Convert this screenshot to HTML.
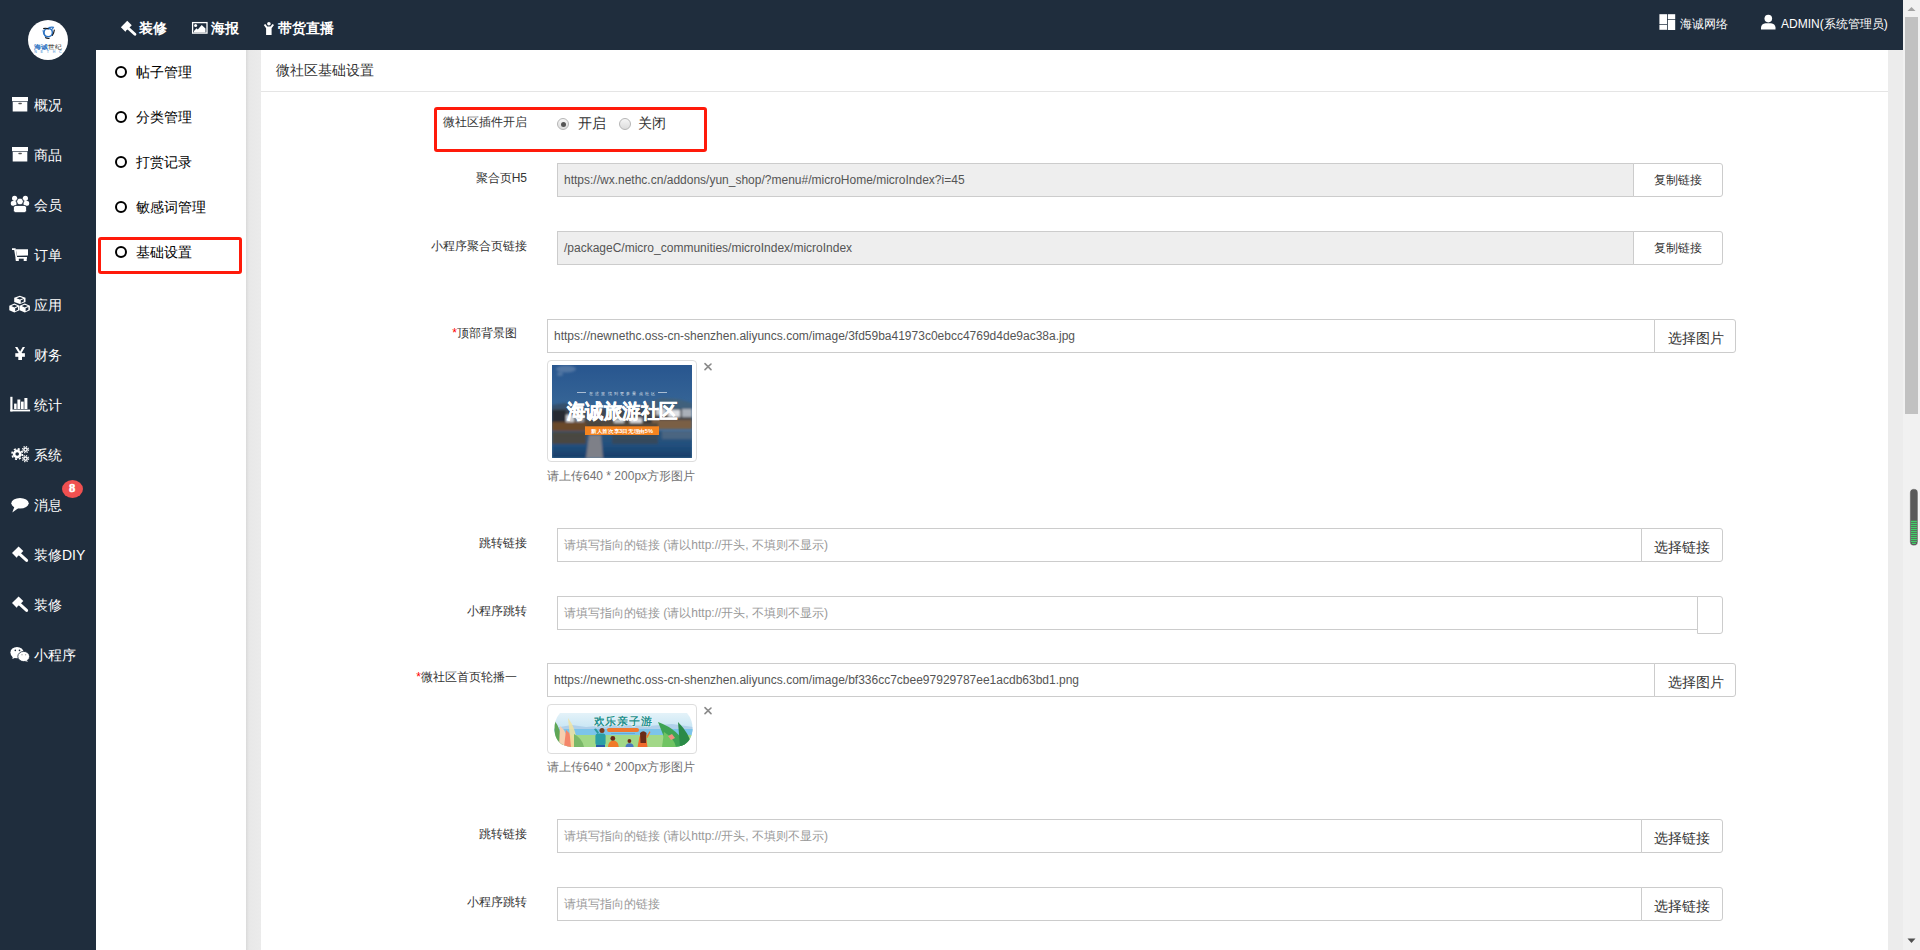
<!DOCTYPE html>
<html><head><meta charset="utf-8">
<style>
*{box-sizing:border-box;margin:0;padding:0}
html,body{width:1920px;height:950px;overflow:hidden;background:#fff;font-family:"Liberation Sans",sans-serif;}
.abs{position:absolute}
#side{left:0;top:0;width:96px;height:950px;background:#1f2d3d}
#top{left:0;top:0;width:1903px;height:50px;background:#1f2d3d}
#sub{left:96px;top:50px;width:150px;height:900px;background:#fff}
#gl{left:246px;top:50px;width:15px;height:900px;background:linear-gradient(to right,#dadada,#e8e8e8 3px,#ebebeb)}
#content{left:261px;top:50px;width:1627px;height:900px;background:#fff}
#gr{left:1888px;top:50px;width:15px;height:900px;background:#ececec}
#sb{left:1903px;top:0;width:17px;height:950px;background:#f1f1f1}
.t{position:absolute;white-space:nowrap;line-height:1}
.w{color:#fff}
.navt{font-size:14px;font-weight:bold;color:#fff}
.side-t{font-size:14px;color:#fff}
.subt{font-size:14px;color:#000}
.lbl{font-size:12px;color:#333;text-align:right}
.inp{position:absolute;height:34px;border:1px solid #ccc;background:#fff;font-size:12px;color:#555}
.inp.ro{background:#eee}
.inp span{position:absolute;left:6px;top:10px;white-space:nowrap;line-height:1}
.inp span.ph{color:#999}
.btn{position:absolute;height:34px;border:1px solid #ccc;background:#fff;border-radius:0 3px 3px 0;color:#333}
.btn span{position:absolute;white-space:nowrap;line-height:1}
.redbox{position:absolute;border:3px solid #ff1a0a;border-radius:3px}
.circ{position:absolute;width:12px;height:12px;border:2px solid #000;border-radius:50%}
.radio{width:12px;height:12px;border-radius:50%;border:1px solid #b5b5b5;background:linear-gradient(#f6f6f6,#dcdcdc)}
.radio.on::after{content:"";position:absolute;left:2.5px;top:2.5px;width:5px;height:5px;border-radius:50%;background:#555}
.thumb{border:1px solid #ddd;border-radius:4px;background:#fff}
.x{font-size:14px;font-weight:bold;color:#777}
.help{font-size:12px;color:#737373}
#img1{background:linear-gradient(#2e5f95,#3d6d9a 40%,#4a5a6a 55%,#6a5030 70%,#1f3d60 85%,#14304f)}
#img2{background:linear-gradient(#d8ecf5,#8cc7e0 50%,#9fd27a 75%,#7dbb5a);border-radius:16px}
</style></head><body>
<div id="side" class="abs"></div>
<div id="top" class="abs"></div>
<div id="sub" class="abs"></div>
<div id="gl" class="abs"></div>
<div id="content" class="abs"></div>
<div id="gr" class="abs"></div>
<div id="sb" class="abs"></div>

<svg class="abs" style="left:0;top:0" width="1920" height="950" viewBox="0 0 1920 950">
<g transform="translate(0,0)"><rect x="12" y="97" width="16" height="4.2" fill="#fff"/><rect x="12.7" y="101.8" width="14.6" height="9.7" fill="#fff"/><rect x="18.3" y="102.8" width="3.6" height="1.4" rx=".7" fill="#555"/></g><g transform="translate(0,50)"><rect x="12" y="97" width="16" height="4.2" fill="#fff"/><rect x="12.7" y="101.8" width="14.6" height="9.7" fill="#fff"/><rect x="18.3" y="102.8" width="3.6" height="1.4" rx=".7" fill="#555"/></g>
<!-- users -->
<g fill="#fff">
<circle cx="14.6" cy="198.3" r="2.6"/><circle cx="25.4" cy="198.3" r="2.6"/>
<rect x="10.8" y="201" width="5.8" height="4.8" rx="1.8"/><rect x="23.4" y="201" width="5.8" height="4.8" rx="1.8"/>
<circle cx="20" cy="201.5" r="3.4" stroke="#1f2d3d" stroke-width="0.9"/>
<rect x="13.4" y="205.4" width="13.2" height="7.3" rx="2.4" stroke="#1f2d3d" stroke-width="0.9"/>
</g>
<!-- cart -->
<g fill="#fff">
<path d="M12,248.3 L15.6,248.3 L17.8,260.8 L16,260.8 L14.2,250 L12,250 Z"/>
<polygon points="15.8,249.3 28,249.3 28,255.6 17,255.8"/>
<rect x="17" y="257" width="10" height="1.7"/>
<rect x="15.8" y="258" width="3" height="3"/><rect x="23.7" y="258" width="3" height="3"/>
</g>
<!-- cubes -->
<polygon points="19.85,295.8 25.5,297.85 25.5,301.95 19.85,304.0 14.2,301.95 14.2,297.85" fill="#fff"/><polygon points="19.85,296.94800000000004 23.240000000000002,298.26 19.85,299.49 16.46,298.26" fill="#1f2d3d"/><polygon points="20.754,300.31 23.805,299.08 23.805,301.54 20.754,303.016" fill="#1f2d3d"/><polygon points="14.4,303.4 19.5,305.65 19.5,310.15 14.4,312.4 9.3,310.15 9.3,305.65" fill="#fff"/><polygon points="14.4,304.65999999999997 17.46,306.09999999999997 14.4,307.45 11.34,306.09999999999997" fill="#1f2d3d"/><polygon points="15.216000000000001,308.34999999999997 17.97,307.0 17.97,309.7 15.216000000000001,311.32" fill="#1f2d3d"/><polygon points="24.799999999999997,303.4 29.9,305.65 29.9,310.15 24.799999999999997,312.4 19.7,310.15 19.7,305.65" fill="#fff"/><polygon points="24.799999999999997,304.65999999999997 27.859999999999996,306.09999999999997 24.799999999999997,307.45 21.74,306.09999999999997" fill="#1f2d3d"/><polygon points="25.615999999999996,308.34999999999997 28.369999999999997,307.0 28.369999999999997,309.7 25.615999999999996,311.32" fill="#1f2d3d"/>
<!-- yen -->
<g fill="#fff" stroke="none">
<path d="M15,347 L17.4,347 L20.1,351.6 L22.7,347 L25,347 L21.4,353.3 L18.8,353.3 Z"/>
<rect x="15.3" y="353.2" width="9.6" height="3.6"/>
<rect x="18.3" y="353" width="3.7" height="7"/>
</g>
<!-- bar chart -->
<g fill="#fff">
<rect x="10.3" y="396.8" width="2.2" height="14.6"/><rect x="10.3" y="409.6" width="19.8" height="1.8"/>
<rect x="14.1" y="403.6" width="2.5" height="5.4"/><rect x="17.4" y="399.5" width="2.9" height="9.5"/><rect x="21" y="401.6" width="2.7" height="7.4"/><rect x="24.4" y="398" width="3" height="11"/>
</g>
<!-- cogs -->
<circle cx="17.2" cy="454" r="5.2" fill="none" stroke="#fff" stroke-width="1.6" stroke-dasharray="2.04 2.04"/><circle cx="17.2" cy="454" r="3.1" fill="none" stroke="#fff" stroke-width="2.6000000000000005"/><circle cx="25.5" cy="449.6" r="3.05" fill="none" stroke="#fff" stroke-width="1.3" stroke-dasharray="1.20 1.20"/><circle cx="25.5" cy="449.6" r="1.65" fill="none" stroke="#fff" stroke-width="1.5"/><circle cx="25.5" cy="458.6" r="3.05" fill="none" stroke="#fff" stroke-width="1.3" stroke-dasharray="1.20 1.20"/><circle cx="25.5" cy="458.6" r="1.65" fill="none" stroke="#fff" stroke-width="1.5"/>
<!-- comment -->
<g fill="#fff"><ellipse cx="20" cy="503.2" rx="8.7" ry="5.2"/><path d="M14.5,506.5 L12.3,512.6 L18.5,508 Z"/></g>
<g transform="translate(12,546.4) scale(1.0)"><polygon points="0,6.6 6.6,0 11.3,4.7 4.7,11.3" fill="#fff"/><line x1="8" y1="8" x2="14.6" y2="14.0" stroke="#fff" stroke-width="3" stroke-linecap="round"/><line x1="5.6" y1="10.9" x2="6.9" y2="9.6" stroke="#1f2d3d" stroke-width="1.1"/></g><g transform="translate(12,596.4) scale(1.0)"><polygon points="0,6.6 6.6,0 11.3,4.7 4.7,11.3" fill="#fff"/><line x1="8" y1="8" x2="14.6" y2="14.0" stroke="#fff" stroke-width="3" stroke-linecap="round"/><line x1="5.6" y1="10.9" x2="6.9" y2="9.6" stroke="#1f2d3d" stroke-width="1.1"/></g>
<!-- wechat -->
<g>
<ellipse cx="17" cy="652.6" rx="6.6" ry="5.7" fill="#fff"/><path d="M13,656 L12.3,659 L16,657.5Z" fill="#fff"/>
<circle cx="15.3" cy="650.4" r="0.8" fill="#1f2d3d"/><circle cx="19.5" cy="650.4" r="0.8" fill="#1f2d3d"/>
<ellipse cx="23.7" cy="656.5" rx="5.9" ry="5.1" fill="#fff" stroke="#1f2d3d" stroke-width="0.8"/><path d="M26.5,660 L28,661.8 L24.5,661Z" fill="#fff"/>
<circle cx="22" cy="654.8" r="0.7" fill="#aaa"/><circle cx="25.6" cy="654.8" r="0.7" fill="#aaa"/>
</g>
<!-- top nav icons -->
<g transform="translate(120.9,20.8) scale(0.96)"><polygon points="0,6.6 6.6,0 11.3,4.7 4.7,11.3" fill="#fff"/><line x1="8" y1="8" x2="14.6" y2="14.0" stroke="#fff" stroke-width="3" stroke-linecap="round"/><line x1="5.6" y1="10.9" x2="6.9" y2="9.6" stroke="#1f2d3d" stroke-width="1.1"/></g>
<g><rect x="192.6" y="22.6" width="14.4" height="10.5" fill="none" stroke="#fff" stroke-width="1.3"/>
<circle cx="195.6" cy="25.5" r="1.5" fill="#fff"/><path d="M194,32.4 L194,31 L196.5,28.3 L197.8,29.5 L201.7,25 L205.5,28.5 L205.5,32.4 Z" fill="#fff"/></g>
<g fill="#fff"><circle cx="268.9" cy="23.7" r="1.8"/><path d="M263.8,25 L265.3,24 L267.3,26.6 L270.5,26.6 L272.5,24 L274,25 L271.6,28.3 L271.6,35.1 L266.1,35.1 L266.1,28.3 Z"/></g>
<!-- top right icons -->
<g fill="#fff"><rect x="1659.4" y="14.2" width="7.6" height="9.9"/><rect x="1659.4" y="24.8" width="7.6" height="5"/><rect x="1667.8" y="14.2" width="7.4" height="5"/><rect x="1667.8" y="19.9" width="7.4" height="10.1"/></g>
<g fill="#fff"><circle cx="1768.3" cy="18.6" r="3.8"/><path d="M1761,29.4 L1761,27.5 Q1761.5,23.8 1765.5,23.3 L1771,23.3 Q1775,23.8 1775.5,27.5 L1775.5,29.4 Z"/></g>
</svg>


<!-- logo -->
<svg class="abs" style="left:28px;top:20px" width="40" height="40" viewBox="0 0 40 40">
<circle cx="20" cy="20" r="20" fill="#fff"/>
<circle cx="20.2" cy="12.6" r="4.2" fill="none" stroke="#2d73c2" stroke-width="1.5"/>
<path d="M15.2,8.6 Q18,7.8 20.8,9" stroke="#111" stroke-width="1.1" fill="none"/>
<path d="M20.5,7.6 Q23.5,6.9 25.5,7.3 Q24.8,9 23.5,9.8" stroke="#2d73c2" stroke-width="1.1" fill="none"/>
<path d="M26.4,9.6 Q26,13 24.2,15.8" stroke="#111" stroke-width="1.1" fill="none"/>
<path d="M15,10.2 Q15.2,14.5 17.8,17.2" stroke="#2d73c2" stroke-width="1.1" fill="none"/>
<path d="M17.2,17.6 Q19,18.6 21.5,18.4" stroke="#111" stroke-width="1.1" fill="none"/>
<text x="6" y="28.6" font-size="6.4" font-weight="bold" fill="#2d73c2" font-family="Liberation Sans, sans-serif" textLength="14" lengthAdjust="spacingAndGlyphs">海诚</text>
<text x="20.2" y="28.6" font-size="6.4" fill="#222" font-family="Liberation Sans, sans-serif" textLength="13.5" lengthAdjust="spacingAndGlyphs">世纪</text>
<text x="6.2" y="32.8" font-size="3.6" font-weight="bold" fill="#7aaee0" font-family="Liberation Sans, sans-serif" textLength="27.5" lengthAdjust="spacing">NETHC</text>
</svg>
<!-- badge -->
<div class="abs" style="left:62px;top:480px;width:21px;height:18px;border-radius:50%;background:#f05050"></div>
<div class="t" style="left:69px;top:482px;font-family:'Liberation Serif',serif;font-weight:bold;font-size:12.5px;color:#fff;-webkit-text-stroke:.5px #fff">8</div>
<!-- scrollbar -->
<svg class="abs" style="left:1903px;top:0" width="17" height="950" viewBox="0 0 17 950">
<polygon points="4.5,11 8.5,7 12.5,11" fill="#a3a3a3"/>
<rect x="2" y="17" width="13" height="397" fill="#c1c1c1"/>
<polygon points="4.5,938.5 12.5,938.5 8.5,943" fill="#505050"/>
<rect x="6.8" y="488.8" width="8.2" height="57" rx="4.1" fill="#5a5a5a" stroke="#fff" stroke-width=".6"/>
<g fill="#3ddc6a">
<rect x="7.9" y="520.8" width="6" height="1.1"/><rect x="7.9" y="522.8" width="6" height="1.1"/><rect x="7.9" y="524.8" width="6" height="1.1"/><rect x="7.9" y="526.8" width="6" height="1.1"/><rect x="7.9" y="528.8" width="6" height="1.1"/><rect x="7.9" y="530.8" width="6" height="1.1"/><rect x="7.9" y="532.8" width="6" height="1.1"/><rect x="7.9" y="534.8" width="6" height="1.1"/><rect x="7.9" y="536.8" width="6" height="1.1"/><rect x="7.9" y="538.8" width="6" height="1.1"/><rect x="7.9" y="540.8" width="6" height="1.1"/><rect x="8.9" y="542.8" width="4" height="1.1"/>
</g>
</svg>


<!-- top nav -->
<div class="t navt" style="left:139px;top:21px">装修</div>
<div class="t navt" style="left:211px;top:21px">海报</div>
<div class="t navt" style="left:278px;top:21px">带货直播</div>
<div class="t w" style="left:1680px;top:18px;font-size:12px">海诚网络</div>
<div class="t w" style="left:1781px;top:18px;font-size:12px">ADMIN(系统管理员)</div>

<!-- side menu -->
<div class="t side-t" style="left:34px;top:98px">概况</div>
<div class="t side-t" style="left:34px;top:148px">商品</div>
<div class="t side-t" style="left:34px;top:198px">会员</div>
<div class="t side-t" style="left:34px;top:248px">订单</div>
<div class="t side-t" style="left:34px;top:298px">应用</div>
<div class="t side-t" style="left:34px;top:348px">财务</div>
<div class="t side-t" style="left:34px;top:398px">统计</div>
<div class="t side-t" style="left:34px;top:448px">系统</div>
<div class="t side-t" style="left:34px;top:498px">消息</div>
<div class="t side-t" style="left:34px;top:548px">装修DIY</div>
<div class="t side-t" style="left:34px;top:598px">装修</div>
<div class="t side-t" style="left:34px;top:648px">小程序</div>

<!-- sub menu -->
<div class="circ" style="left:115px;top:66px"></div><div class="t subt" style="left:136px;top:65px">帖子管理</div>
<div class="circ" style="left:115px;top:111px"></div><div class="t subt" style="left:136px;top:110px">分类管理</div>
<div class="circ" style="left:115px;top:156px"></div><div class="t subt" style="left:136px;top:155px">打赏记录</div>
<div class="circ" style="left:115px;top:201px"></div><div class="t subt" style="left:136px;top:200px">敏感词管理</div>
<div class="circ" style="left:115px;top:246px"></div><div class="t subt" style="left:136px;top:245px">基础设置</div>
<div class="redbox" style="left:98px;top:237px;width:144px;height:37px"></div>

<!-- content header -->
<div class="t" style="left:276px;top:63px;font-size:14px;color:#333">微社区基础设置</div>
<div class="abs" style="left:261px;top:91px;width:1627px;height:1px;background:#e5e5e5"></div>


<!-- row1 -->
<div class="redbox" style="left:434px;top:107px;width:273px;height:45px"></div>
<div class="t lbl" style="left:443px;top:116px">微社区插件开启</div>
<div class="abs radio on" style="left:557px;top:118px"></div><div class="t" style="left:578px;top:116px;font-size:14px;color:#333">开启</div>
<div class="abs radio" style="left:619px;top:118px"></div><div class="t" style="left:638px;top:116px;font-size:14px;color:#333">关闭</div>

<!-- row2 -->
<div class="t lbl" style="right:1393px;top:172px">聚合页H5</div>
<div class="inp ro" style="left:557px;top:163px;width:1077px"><span>https://wx.nethc.cn/addons/yun_shop/?menu#/microHome/microIndex?i=45</span></div>
<div class="btn" style="left:1633px;top:163px;width:90px"><span style="left:20px;top:10px;font-size:12px">复制链接</span></div>

<!-- row3 -->
<div class="t lbl" style="right:1393px;top:240px">小程序聚合页链接</div>
<div class="inp ro" style="left:557px;top:231px;width:1077px"><span>/packageC/micro_communities/microIndex/microIndex</span></div>
<div class="btn" style="left:1633px;top:231px;width:90px"><span style="left:20px;top:10px;font-size:12px">复制链接</span></div>

<!-- row4 -->
<div class="t lbl" style="right:1403px;top:327px"><span style="color:#f00">*</span>顶部背景图</div>
<div class="inp" style="left:547px;top:319px;width:1108px"><span>https://newnethc.oss-cn-shenzhen.aliyuncs.com/image/3fd59ba41973c0ebcc4769d4de9ac38a.jpg</span></div>
<div class="btn" style="left:1654px;top:319px;width:82px"><span style="left:13px;top:11px;font-size:14px">选择图片</span></div>
<div class="thumb abs" style="left:547px;top:360px;width:150px;height:102px"><svg class="abs" style="left:4px;top:4px" width="140" height="93" viewBox="0 0 140 93">
<defs>
<linearGradient id="sky" x1="0" y1="0" x2="0" y2="1"><stop offset="0" stop-color="#28568f"/><stop offset=".5" stop-color="#386797"/><stop offset="1" stop-color="#4f7ba2"/></linearGradient>
<linearGradient id="wat" x1="0" y1="0" x2="0" y2="1"><stop offset="0" stop-color="#2f5478"/><stop offset=".5" stop-color="#22507e"/><stop offset="1" stop-color="#173d68"/></linearGradient>
<linearGradient id="band" x1="0" y1="0" x2="0" y2="1"><stop offset="0" stop-color="#3a4656"/><stop offset=".5" stop-color="#4a4a4c"/><stop offset="1" stop-color="#4f4032"/></linearGradient>
<filter id="bl" x="-5%" y="-5%" width="110%" height="110%"><feGaussianBlur stdDeviation=".9"/></filter>
</defs>
<rect width="140" height="93" fill="url(#sky)"/>
<g filter="url(#bl)">
<ellipse cx="14" cy="4" rx="10" ry="3.5" fill="#8ea6c0" opacity=".4"/>
<ellipse cx="8" cy="9" rx="3" ry="2" fill="#8ea6c0" opacity=".35"/>
<path d="M0,40 L12,38 L24,40 L34,44 L0,46Z" fill="#34506c"/>
<path d="M88,40 L110,33 L126,34 L140,38 L140,47 L88,47Z" fill="#40607c"/>
<rect x="0" y="44" width="140" height="19" fill="url(#band)"/>
<rect x="0" y="45" width="14" height="14" fill="#262a30"/>
<rect x="14" y="50" width="8" height="7" fill="#d0d2d6"/>
<rect x="24" y="49" width="8" height="8" fill="#9a9ea4"/>
<rect x="104" y="44" width="10" height="6" fill="#c8ccd2"/>
<rect x="116" y="45" width="12" height="7" fill="#e0e2e6"/>
<rect x="130" y="44" width="10" height="8" fill="#aab0b8"/>
<rect x="62" y="54" width="10" height="5" fill="#c0c4c8"/>
<rect x="78" y="53" width="12" height="6" fill="#d8dade"/>
<rect x="92" y="52" width="8" height="6" fill="#30343a"/>
<rect x="0" y="57" width="34" height="21" fill="#6a4a2c"/>
<rect x="100" y="55" width="40" height="9" fill="#7a5e44"/>
<rect x="50" y="58" width="56" height="6" fill="#54483a"/>
<rect x="0" y="66" width="140" height="27" fill="url(#wat)"/>
<rect x="0" y="67" width="34" height="12" fill="#54442f" opacity=".75"/>
<rect x="60" y="66" width="46" height="13" fill="#4a4232" opacity=".45"/>
<rect x="110" y="66" width="30" height="8" fill="#6a7888" opacity=".5"/>
<polygon points="37,70 49,70 51,93 34,93" fill="#7e8088"/>
</g>
<rect x="25" y="27.2" width="9" height=".7" fill="#dfe6ee"/><rect x="106" y="27.2" width="9" height=".7" fill="#dfe6ee"/>
<text x="70" y="29.6" text-anchor="middle" font-size="3.8" fill="#e6ecf2" font-family="Liberation Sans, sans-serif" textLength="66" lengthAdjust="spacing">在这里找到更多景点社区</text>
<text x="70" y="53.2" text-anchor="middle" font-size="19.5" font-weight="bold" fill="#fff" stroke="#fff" stroke-width=".5" font-family="Liberation Sans, sans-serif" textLength="111" lengthAdjust="spacingAndGlyphs">海诚旅游社区</text>
<rect x="33" y="61.3" width="74" height="8.7" fill="#f5841f"/>
<text x="70" y="67.6" text-anchor="middle" font-size="5" font-weight="bold" fill="#fff" font-family="Liberation Sans, sans-serif" textLength="62" lengthAdjust="spacingAndGlyphs">新人首次享3日无理由5%</text>
</svg></div>
<svg class="abs" style="left:703px;top:362px" width="10" height="10"><path d="M2,1.6 L8,7.6 M8,2 L2,7.6" stroke="#8a8a8a" stroke-width="1.6" stroke-linecap="round"/></svg>
<div class="t help" style="left:547px;top:470px">请上传640 * 200px方形图片</div>

<!-- row5 -->
<div class="t lbl" style="right:1393px;top:537px">跳转链接</div>
<div class="inp" style="left:557px;top:528px;width:1085px"><span class="ph">请填写指向的链接 (请以http://开头, 不填则不显示)</span></div>
<div class="btn" style="left:1641px;top:528px;width:82px"><span style="left:12px;top:11px;font-size:14px">选择链接</span></div>

<!-- row6 -->
<div class="t lbl" style="right:1393px;top:605px">小程序跳转</div>
<div class="inp" style="left:557px;top:596px;width:1141px"><span class="ph">请填写指向的链接 (请以http://开头, 不填则不显示)</span></div>
<div class="btn" style="left:1697px;top:596px;width:26px;height:38px"></div>

<!-- row7 -->
<div class="t lbl" style="right:1403px;top:671px"><span style="color:#f00">*</span>微社区首页轮播一</div>
<div class="inp" style="left:547px;top:663px;width:1108px"><span>https://newnethc.oss-cn-shenzhen.aliyuncs.com/image/bf336cc7cbee97929787ee1acdb63bd1.png</span></div>
<div class="btn" style="left:1654px;top:663px;width:82px"><span style="left:13px;top:11px;font-size:14px">选择图片</span></div>
<div class="thumb abs" style="left:547px;top:704px;width:150px;height:50px"><svg class="abs" style="left:5.5px;top:7px" width="139" height="36" viewBox="0 0 139 36">
<defs>
<linearGradient id="sky2" x1="0" y1="0" x2="0" y2="1"><stop offset="0" stop-color="#e6f3f9"/><stop offset=".45" stop-color="#c8e6f4"/><stop offset="1" stop-color="#b0dcf0"/></linearGradient>
<clipPath id="pill"><path d="M6,1 L133,1 Q139,8 138.5,18 Q137,34 121,35 L18,35 Q1.5,34 0.5,18 Q0,8 6,1Z"/></clipPath>
</defs>
<g clip-path="url(#pill)">
<rect width="139" height="36" fill="url(#sky2)"/>
<path d="M0,16 L18,13 L32,15 L60,12.5 L95,14 L118,12 L139,15 L139,20 L0,20Z" fill="#b0d0ea"/>
<rect x="0" y="17" width="139" height="6.5" fill="#7cc4ea"/>
<rect x="0" y="23" width="139" height="13" fill="#a2d888"/>
<path d="M0,8 Q7,16 9,35 L0,35Z" fill="#5fa656"/>
<path d="M6,14 Q14,20 15,35 L5,35Z" fill="#f7d0b0"/>
<path d="M12,18 Q20,24 21,35 L10,35Z" fill="#f4866a"/>
<path d="M14,6 Q22,16 24,35 L17,35Z" fill="#f2e4a0" opacity=".85"/>
<path d="M20,22 Q28,26 30,35 L20,35Z" fill="#7ab868"/>
<path d="M104,10 Q126,18 132,35 L114,35Z" fill="#3ea454"/>
<path d="M110,20 Q120,26 122,35 L108,35Z" fill="#70c462"/>
<path d="M124,10 Q136,22 138,35 L126,35Z" fill="#2a8a48"/>
<path d="M114,24 L118,22 L121,26 L117,28Z" fill="#f29080"/>
<path d="M53,17.5 Q53,16 55,16 L83,16 Q85,16 85,18 Q85,20 83,20 L55,20 Q53,20 53,17.5Z" fill="#f07830"/>
<rect x="57" y="21" width="24" height="1" fill="#5a9ac8" opacity=".6"/>
<path d="M40,17 L42,16.4 L45,20.5 L43.5,22Z" fill="#2a9aa0"/>
<rect x="41.4" y="21.6" width="10.2" height="11.8" rx="2.6" fill="#2a9ea6"/><circle cx="48" cy="18.6" r="2.5" fill="#7a3a20"/><rect x="42" y="33" width="9" height="3" fill="#2a5aa8"/>
<path d="M53.9,35 Q54.5,28.5 59.3,28.5 Q64.2,28.5 64.8,35Z" fill="#f07a28"/><circle cx="58.8" cy="26.4" r="2.4" fill="#6a2a18"/>
<path d="M71.5,35 Q71.6,31.2 75.6,31.2 Q79.6,31.2 79.7,35Z" fill="#4a78c0"/><circle cx="75.4" cy="29" r="1.9" fill="#6a2a18"/>
<path d="M83.6,35 L85.5,24.5 Q89,22 92,24.5 L93.5,35Z" fill="#f06a2a"/><path d="M86,21 Q89.4,17.5 92.5,21 L92,31 L86.5,31Z" fill="#6a2a18"/>
<path d="M92,25 L95.5,19.2 L96.5,20 L93.5,26Z" fill="#f07a30"/>
</g>
<text x="68.5" y="12.6" text-anchor="middle" font-size="10.5" font-weight="bold" fill="#23908e" stroke="#fff" stroke-width=".8" paint-order="stroke" font-family="Liberation Sans, sans-serif" textLength="58" lengthAdjust="spacing">欢乐亲子游</text>
</svg></div>
<svg class="abs" style="left:703px;top:706px" width="10" height="10"><path d="M2,1.6 L8,7.6 M8,2 L2,7.6" stroke="#8a8a8a" stroke-width="1.6" stroke-linecap="round"/></svg>
<div class="t help" style="left:547px;top:761px">请上传640 * 200px方形图片</div>

<!-- row8 -->
<div class="t lbl" style="right:1393px;top:828px">跳转链接</div>
<div class="inp" style="left:557px;top:819px;width:1085px"><span class="ph">请填写指向的链接 (请以http://开头, 不填则不显示)</span></div>
<div class="btn" style="left:1641px;top:819px;width:82px"><span style="left:12px;top:11px;font-size:14px">选择链接</span></div>

<!-- row9 -->
<div class="t lbl" style="right:1393px;top:896px">小程序跳转</div>
<div class="inp" style="left:557px;top:887px;width:1085px"><span class="ph">请填写指向的链接</span></div>
<div class="btn" style="left:1641px;top:887px;width:82px"><span style="left:12px;top:11px;font-size:14px">选择链接</span></div>

</body></html>
